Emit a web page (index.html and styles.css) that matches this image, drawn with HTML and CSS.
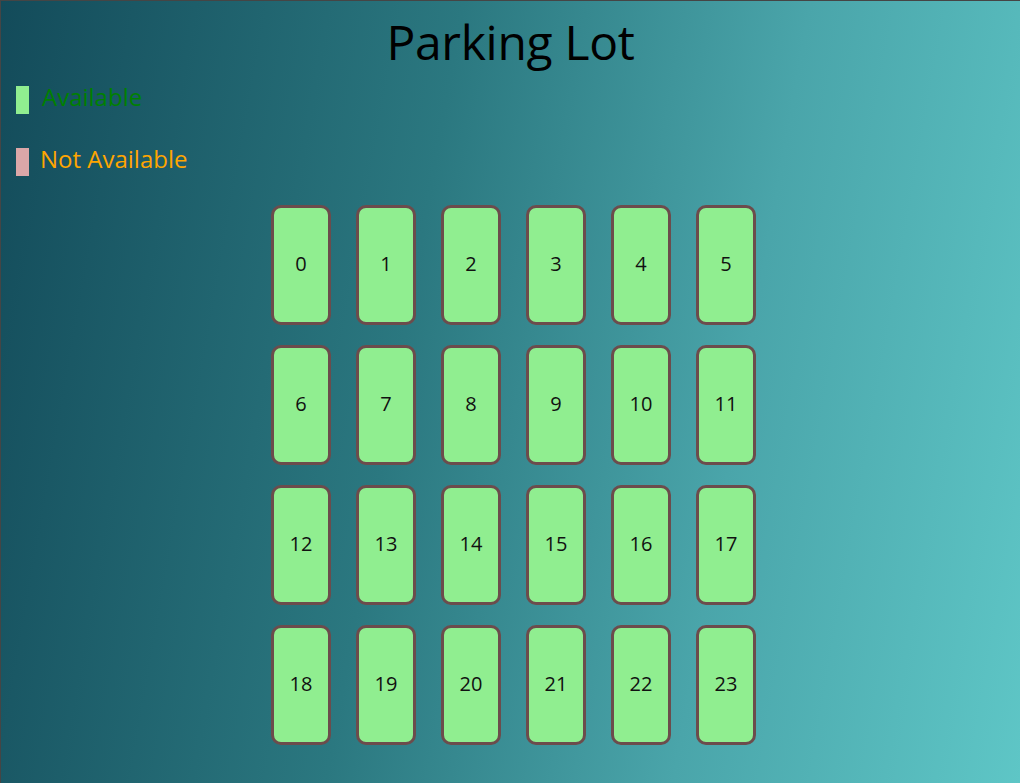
FILE: index.html
```html
<!DOCTYPE html>
<html>
<head>
<meta charset="utf-8">
<link rel="stylesheet" href="styles.css">
</head>
<body>
<div class="app">
  <h1 class="title">Parking Lot</h1>
  <div class="legend">
    <div class="legend-row">
      <span class="swatch swatch-free"></span>
      <span class="label label-free">Available</span>
    </div>
    <div class="legend-row">
      <span class="swatch swatch-busy"></span>
      <span class="label label-busy">Not Available</span>
    </div>
  </div>
  <div class="lot">
    <div class="spot">0</div><div class="spot">1</div><div class="spot">2</div><div class="spot">3</div><div class="spot">4</div><div class="spot">5</div>
    <div class="spot">6</div><div class="spot">7</div><div class="spot">8</div><div class="spot">9</div><div class="spot">10</div><div class="spot">11</div>
    <div class="spot">12</div><div class="spot">13</div><div class="spot">14</div><div class="spot">15</div><div class="spot">16</div><div class="spot">17</div>
    <div class="spot">18</div><div class="spot">19</div><div class="spot">20</div><div class="spot">21</div><div class="spot">22</div><div class="spot">23</div>
  </div>
</div>
</body>
</html>
```

FILE: styles.css
```css
html, body {
  margin: 0;
  padding: 0;
  height: 100%;
}
body {
  font-family: "Open Sans", "Noto Sans", sans-serif;
  overflow: hidden;
}
.app {
  box-sizing: border-box;
  height: 783px;
  border-top: 1px solid #454545;
  border-left: 1px solid #454545;
  background: linear-gradient(100deg, #134b5a 0%, #2b7880 40%, #4aa5aa 70%, #5ec6c6 100%);
  display: flex;
  flex-direction: column;
}
.title {
  margin: 0;
  padding-top: 8px;
  font-size: 48px;
  font-weight: 400;
  line-height: 66px;
  text-align: center;
  color: #000;
  letter-spacing: -0.3px;
}
.legend {
  display: flex;
  flex-direction: column;
  gap: 34px;
  padding-left: 15px;
  margin-top: 11px;
}
.legend-row {
  display: flex;
  align-items: center;
  height: 28px;
}
.swatch {
  width: 13px;
  height: 28px;
}
.swatch-free { background: #90ee90; }
.swatch-busy { background: #dba7a8; }
.label {
  font-size: 24px;
  line-height: 28px;
  position: relative;
  top: -3px;
}
.label-free {
  color: #008000;
  margin-left: 13px;
}
.label-busy {
  color: #ffa500;
  margin-left: 11px;
}
.lot {
  display: grid;
  grid-template-columns: repeat(6, 60px);
  grid-auto-rows: 120px;
  column-gap: 25px;
  row-gap: 20px;
  justify-content: center;
  padding-left: 6px;
  margin-top: 29px;
}
.spot {
  box-sizing: border-box;
  background: #90ee90;
  border: 3px solid #6c4c4c;
  border-radius: 10px;
  display: flex;
  align-items: center;
  justify-content: center;
  padding-bottom: 3px;
  font-size: 20px;
  color: #111;
}
```
